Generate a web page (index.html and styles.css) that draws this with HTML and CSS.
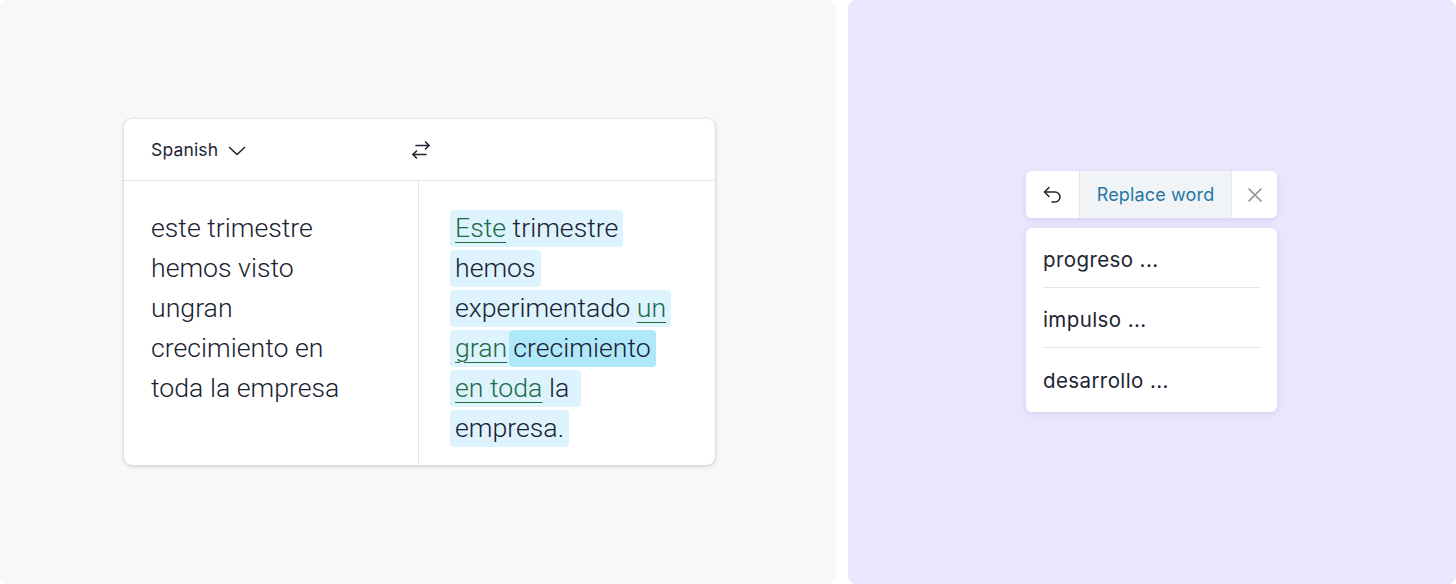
FILE: index.html
```html
<!DOCTYPE html>
<html lang="es">
<head>
<meta charset="utf-8">
<title>Translate</title>
<link rel="stylesheet" href="styles.css">
</head>
<body>
<div class="page">
  <section class="panel panel-left">
    <div class="card">
      <div class="card-header">
        <div class="lang">
          <span class="lang-name">Spanish</span>
          <svg class="chevron" width="18" height="10" viewBox="0 0 18 10" fill="none" stroke="#1d2433" stroke-width="1.6" stroke-linecap="round" stroke-linejoin="round"><polyline points="1.5,1.5 9,8.5 16.5,1.5"/></svg>
        </div>
        <svg class="swap" width="24" height="24" viewBox="0 0 24 24" fill="none" stroke="#1d2433" stroke-width="1.6" stroke-linecap="round" stroke-linejoin="round"><path d="M7 7.5h13"/><path d="M16.5 4l3.5 3.5-3.5 3.5"/><path d="M17 16.5H4"/><path d="M7.5 13L4 16.5 7.5 20"/></svg>
      </div>
      <div class="card-body">
        <div class="col col-src">
          <div class="line">este trimestre</div>
          <div class="line">hemos visto</div>
          <div class="line">ungran</div>
          <div class="line">crecimiento en</div>
          <div class="line">toda la empresa</div>
        </div>
        <div class="col col-dst">
          <div class="line"><span class="hl"><span class="ul">Este</span> trimestre</span></div>
          <div class="line"><span class="hl">hemos</span></div>
          <div class="line"><span class="hl">experimentado <span class="ul">un</span></span></div>
          <div class="line"><span class="hl hl-join"><span class="ul">gran</span></span><span class="hl hl-strong">crecimiento</span></div>
          <div class="line"><span class="hl hl-trail"><span class="ul">en toda</span> la</span></div>
          <div class="line"><span class="hl">empresa.</span></div>
        </div>
      </div>
    </div>
  </section>
  <section class="panel panel-right">
    <div class="popup">
      <div class="toolbar">
        <button class="tb-btn tb-undo" aria-label="Undo">
          <svg width="24" height="24" viewBox="0 0 24 24" fill="none" stroke="#1d2433" stroke-width="1.5" stroke-linecap="round" stroke-linejoin="round"><path d="M8 4.5L3.5 9 8 13.5"/><path d="M3.5 9h10.5a5 5 0 0 1 0 10h-3"/></svg>
        </button>
        <button class="tb-btn tb-replace">Replace word</button>
        <button class="tb-btn tb-close" aria-label="Close">
          <svg width="16" height="16" viewBox="0 0 16 16" fill="none" stroke="#8b9099" stroke-width="1.6" stroke-linecap="round"><path d="M2 2l12 12M14 2L2 14"/></svg>
        </button>
      </div>
      <ul class="menu">
        <li class="menu-item">progreso ...</li>
        <li class="menu-item">impulso ...</li>
        <li class="menu-item">desarrollo ...</li>
      </ul>
    </div>
  </section>
</div>
</body>
</html>
```

FILE: styles.css
```css
* { box-sizing: border-box; }
html, body { margin: 0; padding: 0; background: #ffffff; }
body { font-family: Inter, "Noto Sans", sans-serif; color: #1d2433; }

.page {
  display: flex;
  gap: 12px;
  width: 1456px;
  height: 584px;
}

.panel {
  height: 584px;
  border-radius: 8px;
  display: flex;
}

.panel-left {
  width: 836px;
  background: #f8f8f8;
  padding: 119px 0 0 124px;
  align-items: flex-start;
}

.panel-right {
  flex: 1;
  background: #ebe6fd;
  padding: 171px 0 0 178px;
  align-items: flex-start;
}

/* Card */
.card {
  width: 591px;
  background: #ffffff;
  border-radius: 8px;
  box-shadow: 0 1px 4px rgba(20, 30, 50, 0.22), 0 0 1px rgba(20, 30, 50, 0.15);
  overflow: hidden;
}

.card-header {
  height: 62px;
  display: flex;
  align-items: center;
  border-bottom: 1px solid #e3e6ea;
}

.lang {
  width: 285px;
  padding-left: 27px;
  display: flex;
  align-items: center;
  gap: 10px;
}

.lang-name {
  font-size: 17.5px;
  letter-spacing: 0.15px;
  color: #1d2433;
}

.chevron { margin-top: 2px; }

.card-body {
  display: grid;
  grid-template-columns: 295px 1fr;
}

.col {
  font-family: Roboto, "Liberation Sans", sans-serif;
  font-weight: 300;
  font-size: 26.7px;
  line-height: 40px;
  color: #1a2131;
}

.col-src {
  border-right: 1px solid #e3e6ea;
  padding: 27px 0 17px 27px;
}

.col-dst {
  padding: 27px 0 17px 31px;
}

.line { white-space: nowrap; }

.hl {
  background: #ddf3fd;
  padding: 2px 5px 3px;
  border-radius: 4px;
}

.hl-join {
  border-radius: 4px 0 0 4px;
  padding-right: 2px;
}

.hl-strong {
  background: #b0e8fb;
  padding-left: 4px;
}

.hl-trail { padding-right: 12px; }

.ul {
  color: #1d6b48;
  text-decoration: underline;
  text-decoration-color: #1d6b48;
  text-decoration-thickness: 1px;
  text-underline-offset: 5px;
}

/* Popup */
.popup {
  width: 251px;
  display: flex;
  flex-direction: column;
  gap: 10px;
}

.toolbar {
  height: 47px;
  display: flex;
  background: #ffffff;
  border-radius: 6px;
  overflow: hidden;
  box-shadow: 0 2px 6px rgba(90, 80, 160, 0.14);
}

.tb-btn {
  border: 0;
  margin: 0;
  padding: 0;
  background: #ffffff;
  font-family: Inter, "Noto Sans", sans-serif;
  display: flex;
  align-items: center;
  justify-content: center;
  cursor: pointer;
}

.tb-undo {
  width: 54px;
  border-right: 1px solid #e5e7eb;
}

.tb-replace {
  flex: 1;
  background: #f1f4f7;
  color: #1f77a6;
  font-size: 18px;
  letter-spacing: 0.15px;
  border-right: 1px solid #e5e7eb;
}

.tb-close { width: 45px; }

.menu {
  list-style: none;
  margin: 0;
  padding: 0 17px;
  background: #ffffff;
  border-radius: 6px;
  box-shadow: 0 2px 6px rgba(90, 80, 160, 0.14);
}

.menu-item {
  height: 60px;
  padding-top: 3px;
  display: flex;
  align-items: center;
  font-size: 20.5px;
  color: #1d2433;
  letter-spacing: 0.4px;
  border-bottom: 1px solid #e3e5e8;
}

.menu-item:last-child { border-bottom: 0; height: 64px; padding-top: 0; }
```
